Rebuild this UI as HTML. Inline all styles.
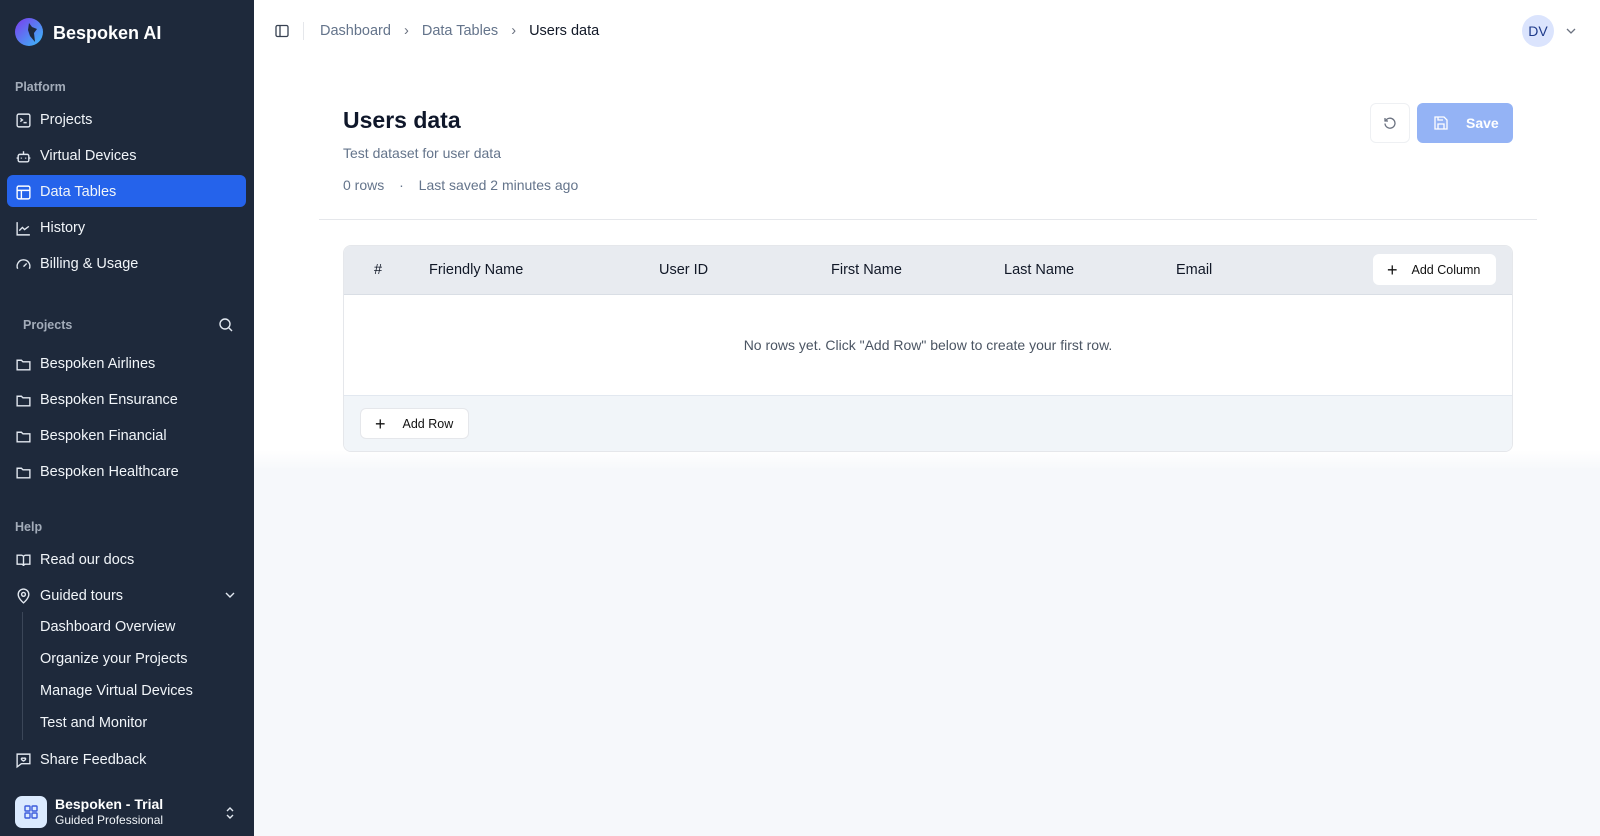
<!DOCTYPE html>
<html><head><meta charset="utf-8"><style>
*{box-sizing:border-box;margin:0;padding:0}
body{width:1600px;height:836px;overflow:hidden;font-family:"Liberation Sans",sans-serif;background:#fff;position:relative}
.sb{position:absolute;left:0;top:0;width:254px;height:836px;background:#1e293b;color:#f1f5f9}
.a{position:absolute}
.it{position:absolute;left:15px;font-size:14.5px;color:#f1f5f9;display:flex;align-items:center;gap:8px;height:20px}
.it svg{width:17px;height:17px;flex:none}
.lbl{position:absolute;font-size:12.5px;color:#a3acb9;font-weight:bold}
.sub{position:absolute;left:40px;font-size:14.5px;color:#f1f5f9}
.main{position:absolute;left:254px;top:0;right:0;bottom:0;background:linear-gradient(#fff 0,#fff 450px,#f6f8fb 470px)}
.th{position:absolute;top:262px;font-size:14.5px;color:#111827;font-weight:500}
.btn{position:absolute;background:#fff;border:1px solid #e5e7eb;border-radius:6px;font-size:12.5px;color:#111;display:flex;align-items:center}
</style></head><body>
<div class="sb">
 <svg class="a" style="left:14px;top:17px" width="32" height="32" viewBox="0 0 32 32"><defs><linearGradient id="g" x1="0" y1="0" x2="1" y2="1"><stop offset="0" stop-color="#7c3aed"/><stop offset="1" stop-color="#38bdf8"/></linearGradient></defs><circle cx="15" cy="15" r="14" fill="url(#g)"/><path d="M15 6l3 4 5 2-3 4 1 9-5-6-2-6z" fill="#1e293b"/></svg>
 <div class="a" style="left:53px;top:23px;font-size:18px;font-weight:bold;color:#fff">Bespoken AI</div>
 <div class="lbl" style="left:15px;top:80px">Platform</div>
 <div class="it" style="top:110px"><svg viewBox="0 0 16 16" fill="none" stroke="#e2e8f0" stroke-width="1.3"><rect x="2" y="2" width="12" height="12" rx="1.5"/><path d="M5 6l2 1.5L5 9M8 10h3"/></svg>Projects</div>
 <div class="it" style="top:146px"><svg viewBox="0 0 16 16" fill="none" stroke="#e2e8f0" stroke-width="1.3"><rect x="3" y="6" width="10" height="7" rx="1.5"/><path d="M8 3v3M1.5 9.5h1.5M13 9.5h1.5M6 9v1M10 9v1"/></svg>Virtual Devices</div>
 <div class="a" style="left:7px;top:175px;width:239px;height:32px;background:#2563eb;border-radius:6px"></div>
 <div class="it" style="top:182px"><svg viewBox="0 0 16 16" fill="none" stroke="#fff" stroke-width="1.3"><rect x="2" y="2" width="12" height="12" rx="1.5"/><path d="M2 6h12M6 6v8"/></svg>Data Tables</div>
 <div class="it" style="top:218px"><svg viewBox="0 0 16 16" fill="none" stroke="#e2e8f0" stroke-width="1.3"><path d="M2 2v12h12M4 10l3-3 2 2 4-3"/></svg>History</div>
 <div class="it" style="top:254px"><svg viewBox="0 0 16 16" fill="none" stroke="#e2e8f0" stroke-width="1.3"><path d="M2.5 12a6 6 0 1 1 11 0M8 10l3-3"/></svg>Billing &amp; Usage</div>
 <div class="lbl" style="left:23px;top:318px">Projects</div>
 <svg class="a" style="left:218px;top:317px" width="16" height="16" viewBox="0 0 16 16" fill="none" stroke="#e2e8f0" stroke-width="1.4"><circle cx="7" cy="7" r="5"/><path d="M11 11l3 3"/></svg>
 <div class="it" style="top:354px"><svg viewBox="0 0 16 16" fill="none" stroke="#e2e8f0" stroke-width="1.3"><path d="M2 4h4l1.5 1.5H14V13H2z"/></svg>Bespoken Airlines</div>
 <div class="it" style="top:390px"><svg viewBox="0 0 16 16" fill="none" stroke="#e2e8f0" stroke-width="1.3"><path d="M2 4h4l1.5 1.5H14V13H2z"/></svg>Bespoken Ensurance</div>
 <div class="it" style="top:426px"><svg viewBox="0 0 16 16" fill="none" stroke="#e2e8f0" stroke-width="1.3"><path d="M2 4h4l1.5 1.5H14V13H2z"/></svg>Bespoken Financial</div>
 <div class="it" style="top:462px"><svg viewBox="0 0 16 16" fill="none" stroke="#e2e8f0" stroke-width="1.3"><path d="M2 4h4l1.5 1.5H14V13H2z"/></svg>Bespoken Healthcare</div>
 <div class="lbl" style="left:15px;top:520px">Help</div>
 <div class="it" style="top:550px"><svg viewBox="0 0 16 16" fill="none" stroke="#e2e8f0" stroke-width="1.3"><path d="M2 3h4a2 2 0 0 1 2 2v8a2 2 0 0 0-2-1.5H2zM14 3h-4a2 2 0 0 0-2 2v8a2 2 0 0 1 2-1.5h4z"/></svg>Read our docs</div>
 <div class="it" style="top:586px"><svg viewBox="0 0 16 16" fill="none" stroke="#e2e8f0" stroke-width="1.3"><path d="M8 14s5-4 5-8A5 5 0 0 0 3 6c0 4 5 8 5 8z"/><circle cx="8" cy="6" r="1.8"/></svg>Guided tours</div>
 <svg class="a" style="left:224px;top:589px" width="12" height="12" viewBox="0 0 12 12" fill="none" stroke="#e2e8f0" stroke-width="1.4"><path d="M2 4l4 4 4-4"/></svg>
 <div class="a" style="left:22px;top:612px;width:1px;height:128px;background:#3b4658"></div>
 <div class="sub" style="top:619px">Dashboard Overview</div>
 <div class="sub" style="top:651px">Organize your Projects</div>
 <div class="sub" style="top:683px">Manage Virtual Devices</div>
 <div class="sub" style="top:715px">Test and Monitor</div>
 <div class="it" style="top:750px"><svg viewBox="0 0 16 16" fill="none" stroke="#e2e8f0" stroke-width="1.3"><path d="M2 2h12v9H6l-4 3z"/><path d="M6 6.5c0-1 2-1 2 0 0-1 2-1 2 0 0 1-2 2-2 2s-2-1-2-2z"/></svg>Share Feedback</div>
 <div class="a" style="left:15px;top:796px;width:32px;height:32px;background:#dbeafe;border-radius:7px"></div>
 <svg class="a" style="left:23px;top:804px" width="16" height="16" viewBox="0 0 16 16" fill="none" stroke="#3b5bdb" stroke-width="1.4"><rect x="2" y="2" width="5" height="5" rx=".8"/><rect x="9" y="2" width="5" height="5" rx=".8"/><rect x="2" y="9" width="5" height="5" rx=".8"/><rect x="9" y="9" width="5" height="5" rx=".8"/></svg>
 <div class="a" style="left:55px;top:796px;font-size:14px;font-weight:bold;color:#fff">Bespoken - Trial</div>
 <div class="a" style="left:55px;top:813px;font-size:12px;color:#f1f5f9">Guided Professional</div>
 <svg class="a" style="left:224px;top:805px" width="12" height="16" viewBox="0 0 12 16" fill="none" stroke="#e2e8f0" stroke-width="1.4"><path d="M3 6l3-3 3 3M3 10l3 3 3-3"/></svg>
</div>
<div class="main">
 <svg class="a" style="left:20px;top:23px" width="16" height="16" viewBox="0 0 16 16" fill="none" stroke="#374151" stroke-width="1.3"><rect x="2" y="2.5" width="12" height="11" rx="1.5"/><path d="M6 2.5v11"/></svg>
 <div class="a" style="left:49px;top:22px;width:1px;height:18px;background:#e5e7eb"></div>
 <div class="a" style="left:66px;top:23px;font-size:14.5px;color:#64748b;white-space:nowrap">Dashboard <span style="margin:0 9px;color:#6b7280">›</span> Data Tables <span style="margin:0 9px;color:#6b7280">›</span> <span style="color:#111827">Users data</span></div>
 <div class="a" style="left:1268px;top:15px;width:32px;height:32px;border-radius:50%;background:#dbe4fd;color:#1e3a8a;font-size:14px;font-weight:500;display:flex;align-items:center;justify-content:center">DV</div>
 <svg class="a" style="left:1311px;top:25px" width="12" height="12" viewBox="0 0 12 12" fill="none" stroke="#6b7280" stroke-width="1.3"><path d="M2 4l4 4 4-4"/></svg>
 <div class="a" style="left:89px;top:107px;font-size:23px;font-weight:bold;color:#0f172a">Users data</div>
 <div class="a" style="left:89px;top:145px;font-size:14px;color:#64748b">Test dataset for user data</div>
 <div class="a" style="left:89px;top:177px;font-size:14px;color:#64748b;white-space:nowrap">0 rows <span style="margin:0 11px">·</span> Last saved 2 minutes ago</div>
 <div class="btn" style="left:1116px;top:103px;width:40px;height:40px;justify-content:center;border-color:#eef0f3"><svg width="16" height="16" viewBox="0 0 16 16" fill="none" stroke="#6b7280" stroke-width="1.3"><path d="M3 3v3h3"/><path d="M3.5 6A5 5 0 1 1 3 8.5"/></svg></div>
 <div class="a" style="left:1163px;top:103px;width:96px;height:40px;background:#94b3f5;border-radius:6px;color:#fff;font-weight:bold;font-size:14px;display:flex;align-items:center"><svg style="margin-left:16px" width="16" height="16" viewBox="0 0 16 16" fill="none" stroke="#fff" stroke-width="1.3"><path d="M3 2h8l3 3v9H2V2z"/><path d="M5 2v3h5M5 14V9h6v5"/></svg><span style="margin-left:17px">Save</span></div>
 <div class="a" style="left:65px;top:219px;width:1218px;height:1px;background:#e5e7eb"></div>
 <div class="a" style="left:89px;top:245px;width:1170px;height:207px;border:1px solid #e5e7eb;border-radius:8px;overflow:hidden;background:#fff">
  <div class="a" style="left:0;top:0;right:0;height:49px;background:#e8ebf0;border-bottom:1px solid #d9dee5"></div>
  <div class="a" style="left:0;top:149px;right:0;bottom:0;background:#f1f5f9;border-top:1px solid #e2e8f0"></div>
  <div class="a" style="left:0;right:0;top:91px;text-align:center;font-size:14px;color:#4b5563">No rows yet. Click "Add Row" below to create your first row.</div>
 </div>
 <div class="th" style="left:120px">#</div>
 <div class="th" style="left:175px">Friendly Name</div>
 <div class="th" style="left:405px">User ID</div>
 <div class="th" style="left:577px">First Name</div>
 <div class="th" style="left:750px">Last Name</div>
 <div class="th" style="left:922px">Email</div>
 <div class="btn" style="left:1119px;top:254px;width:123px;height:31px;border-color:#fff"><span style="margin-left:13px;font-size:18px;line-height:1">+</span><span style="margin-left:14px">Add Column</span></div>
 <div class="btn" style="left:106px;top:408px;width:109px;height:31px"><span style="margin-left:14px;font-size:18px;line-height:1">+</span><span style="margin-left:17px">Add Row</span></div>
</div>
</body></html>
